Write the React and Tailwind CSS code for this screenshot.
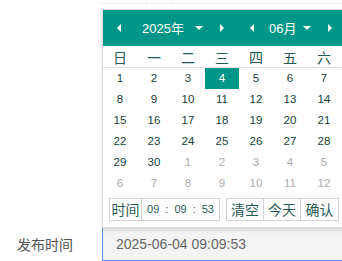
import React from "react";

const weeks = ["日", "一", "二", "三", "四", "五", "六"];
const rows = [
  [1, 2, 3, 4, 5, 6, 7],
  [8, 9, 10, 11, 12, 13, 14],
  [15, 16, 17, 18, 19, 20, 21],
  [22, 23, 24, 25, 26, 27, 28],
  [29, 30, 1, 2, 3, 4, 5],
  [6, 7, 8, 9, 10, 11, 12],
];

function TriLeft() {
  return <span className="block w-0 h-0 border-y-[4px] border-y-transparent border-r-[4px] border-r-white" />;
}
function TriRight() {
  return <span className="block w-0 h-0 border-y-[4px] border-y-transparent border-l-[4px] border-l-white" />;
}
function TriDown() {
  return <span className="block w-0 h-0 border-x-[4px] border-x-transparent border-t-[4px] border-t-white" />;
}

export default function App() {
  return (
    <div className="w-[342px] h-[261px] bg-white overflow-hidden relative" style={{ fontFamily: '"Liberation Sans", "Noto Sans CJK SC", sans-serif' }}>
      <div className="ml-[100px] h-[4px] border-b border-[#ececec] flex">
        <div className="w-[47px] border-r border-[#ececec]" />
        <div className="w-[26px] border-r border-[#ececec]" />
      </div>
      <div className="ml-[102px] mt-[5px] w-[250px] border border-[#d9d9d9] bg-white shadow-[0_2px_4px_rgba(0,0,0,0.12)] relative z-10">
        <div className="h-[36px] bg-[#009688] text-white flex items-center text-[13px]">
          <div className="w-[14px]" />
          <TriLeft />
          <div className="w-[21px]" />
          <span className="leading-none">2025年</span>
          <div className="w-[11px]" />
          <TriDown />
          <div className="w-[17px]" />
          <TriRight />
          <div className="w-[26px]" />
          <TriLeft />
          <div className="w-[15px]" />
          <span className="leading-none">06月</span>
          <div className="w-[7px]" />
          <TriDown />
          <div className="w-[17px]" />
          <TriRight />
        </div>
        <div className="grid grid-cols-[repeat(7,34px)] h-[22px] border-b border-[#e2e2e2] items-center text-[14px] text-[#1f5a54]" style={{ fontFamily: '"Noto Sans CJK SC", sans-serif' }}>
          {weeks.map((w) => (
            <div key={w} className="text-center leading-none">{w}</div>
          ))}
        </div>
        {rows.map((r, ri) => (
          <div key={ri} className="grid grid-cols-[repeat(7,34px)] h-[21px] text-[11.5px]">
            {r.map((d, di) => {
              const other = (ri === 4 && di >= 2) || ri === 5;
              const sel = ri === 0 && di === 3;
              return (
                <div
                  key={di}
                  className={
                    "flex items-center justify-center " +
                    (sel ? "bg-[#009688] text-white" : other ? "text-[#aaaaaa]" : "text-[#17403c]")
                  }
                >
                  {d}
                </div>
              );
            })}
          </div>
        ))}
        <div className="h-[33px] pt-[4px] pl-[6px] flex items-start text-[#1f5a54]">
          <div className="w-[33px] h-[23px] border border-[#d2d2d2] flex items-center justify-center text-[14px]" style={{ fontFamily: '"Noto Sans CJK SC", sans-serif' }}>时间</div>
          <div className="w-[78px] h-[23px] border border-l-0 border-[#d2d2d2] flex items-center justify-center text-[11px] gap-[6px]">
            <span>09</span><span>:</span><span>09</span><span>:</span><span>53</span>
          </div>
          <div className="w-[6px]" />
          <div className="flex text-[14px]" style={{ fontFamily: '"Noto Sans CJK SC", sans-serif' }}>
            <div className="w-[38px] h-[23px] border border-[#d2d2d2] flex items-center justify-center">清空</div>
            <div className="w-[37px] h-[23px] border border-l-0 border-[#d2d2d2] flex items-center justify-center">今天</div>
            <div className="w-[38px] h-[23px] border border-l-0 border-[#d2d2d2] flex items-center justify-center">确认</div>
          </div>
        </div>
      </div>
      <div className="flex h-[33px]">
        <div className="w-[102px] flex items-center pl-[17px] text-[14px] text-[#555555]" style={{ fontFamily: '"Noto Sans CJK SC", sans-serif' }}>发布时间</div>
        <div className="flex-1 border-l border-b border-[#5b8ce8] bg-[#f3f3f3] flex items-center pl-[13px] text-[14px] text-[#666666]">
          2025-06-04 09:09:53
        </div>
      </div>
    </div>
  );
}
